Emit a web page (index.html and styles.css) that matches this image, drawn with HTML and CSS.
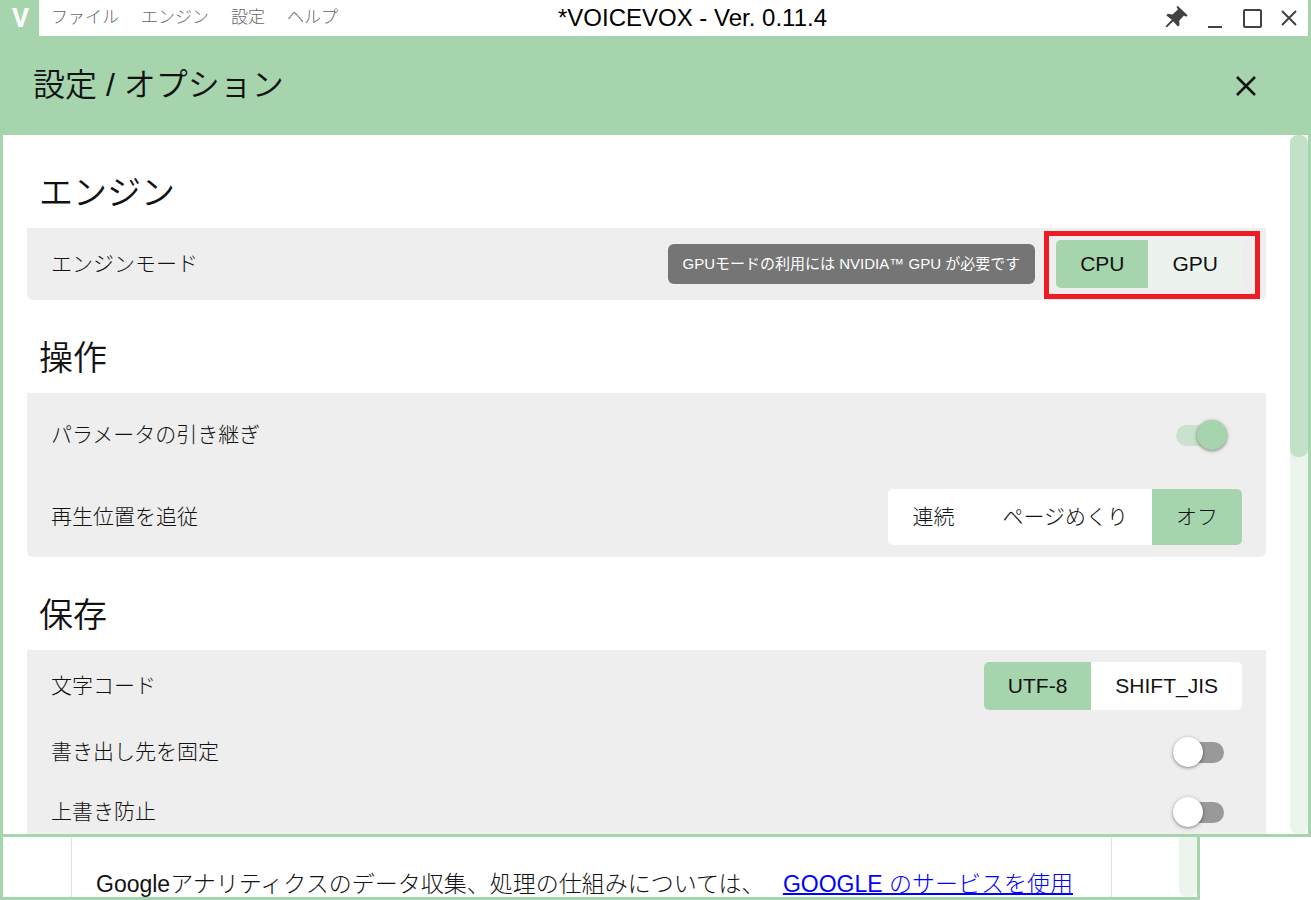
FILE: index.html
```html
<!DOCTYPE html>
<html lang="ja">

<head>
    <meta charset="UTF-8">
    <meta name="viewport" content="width=device-width, initial-scale=1.0">
    <title>VOICEVOX</title>
    <link rel="stylesheet" href="styles.css">
</head>

<body>
    <div class="window">
        <header class="titlebar">
            <span class="logo">V</span>
            <nav class="menu">
                <button type="button">ファイル</button>
                <button type="button">エンジン</button>
                <button type="button">設定</button>
                <button type="button">ヘルプ</button>
            </nav>
            <div class="title">*VOICEVOX - Ver. 0.11.4</div>
            <div class="window-buttons">
                <button type="button" aria-label="最前面に固定">
                    <svg width="23" height="27" viewBox="0 0 68 80"><path fill="currentColor" d="M6 66L1 64L20 44L4 31L8 26L22 28L38 13L34 5L38 3L67 30L63 35L56 31L42 47L43 60L38 64L24 48Z"/></svg>
                </button>
                <button type="button" aria-label="最小化">
                    <svg width="20" height="20" viewBox="0 0 20 20"><path stroke="currentColor" stroke-width="2" d="M3 19H17"/></svg>
                </button>
                <button type="button" aria-label="最大化">
                    <svg width="20" height="20" viewBox="0 0 20 20"><rect x="2" y="2" width="17" height="17" rx="1" fill="none" stroke="currentColor" stroke-width="2"/></svg>
                </button>
                <button type="button" aria-label="閉じる">
                    <svg width="20" height="20" viewBox="0 0 20 20"><path stroke="currentColor" stroke-width="2" d="M3 3L17 17M17 3L3 17"/></svg>
                </button>
            </div>
        </header>

        <div class="toolbar">
            <h1>設定 / オプション</h1>
            <button type="button" class="close" aria-label="設定を閉じる">
                <svg width="24" height="24" viewBox="0 0 24 24"><path stroke="currentColor" stroke-width="2.5" d="M3 3L21 21M21 3L3 21"/></svg>
            </button>
        </div>

        <div class="page">
            <main class="settings">
                <section>
                    <h2>エンジン</h2>
                    <div class="card">
                        <div class="row">
                            <span>エンジンモード</span>
                            <div class="tooltip">GPUモードの利用には NVIDIA™ GPU が必要です</div>
                            <div class="toggle translucent marked">
                                <button type="button" class="active">CPU</button>
                                <button type="button">GPU</button>
                            </div>
                        </div>
                    </div>
                </section>

                <section>
                    <h2>操作</h2>
                    <div class="card">
                        <div class="row tall">
                            <label for="inherit">パラメータの引き継ぎ</label>
                            <input type="checkbox" class="switch" id="inherit" checked>
                        </div>
                        <div class="row">
                            <span>再生位置を追従</span>
                            <div class="toggle large">
                                <button type="button">連続</button>
                                <button type="button">ページめくり</button>
                                <button type="button" class="active">オフ</button>
                            </div>
                        </div>
                    </div>
                </section>

                <section>
                    <h2>保存</h2>
                    <div class="card">
                        <div class="row">
                            <span>文字コード</span>
                            <div class="toggle">
                                <button type="button" class="active">UTF-8</button>
                                <button type="button">SHIFT_JIS</button>
                            </div>
                        </div>
                        <div class="row">
                            <label for="fixed">書き出し先を固定</label>
                            <input type="checkbox" class="switch" id="fixed">
                        </div>
                        <div class="row">
                            <label for="overwrite">上書き防止</label>
                            <input type="checkbox" class="switch" id="overwrite">
                        </div>
                    </div>
                </section>
            </main>
            <div class="scrollbar"><div class="thumb"></div></div>
        </div>
    </div>

    <div class="window-behind">
        <p class="notice">Googleアナリティクスのデータ収集、処理の仕組みについては、 <a href="#">GOOGLE のサービスを使用</a></p>
        <div class="scrollbar"></div>
    </div>
</body>

</html>
```
FILE: styles.css
```css
* {
    box-sizing: border-box;
}

body {
    margin: 0;
    height: 100vh;
    display: flex;
    flex-direction: column;
    overflow: hidden;
    background-color: #fff;
    color: #121212;
    font-family: "Liberation Sans", "Noto Sans CJK JP", sans-serif;
    font-size: 21px;
    font-weight: 300;
    line-height: 32px;
}

button {
    padding: 0;
    border: none;
    background: none;
    color: inherit;
    font: inherit;
    white-space: nowrap;
    cursor: pointer;
}

svg {
    display: block;
}

.window {
    flex: 1;
    min-height: 0;
    display: flex;
    flex-direction: column;
    border: 3px solid #a5d4ad;
    border-top: none;
}

/* Title bar */
.titlebar {
    display: flex;
    align-items: center;
    height: 36px;
    flex-shrink: 0;
}

.logo {
    width: 36px;
    height: 36px;
    padding-right: 1px;
    background-color: #a5d4ad;
    color: #fff;
    font-family: Roboto, sans-serif;
    font-size: 26px;
    font-weight: 700;
    line-height: 36px;
    text-align: center;
}

.menu {
    display: flex;
    gap: 22px;
    padding-left: 12px;
    color: #666;
    font-size: 17px;
}

.title {
    flex: 1;
    padding-right: 118px;
    color: #000;
    font-size: 24px;
    text-align: center;
    white-space: nowrap;
}

.window-buttons {
    display: flex;
    align-items: center;
    gap: 17px;
    padding-right: 9px;
    color: #424242;
}

/* Settings header */
.toolbar {
    display: flex;
    align-items: center;
    justify-content: space-between;
    height: 99px;
    flex-shrink: 0;
    padding: 0 50px 0 30px;
    background-color: #a5d4ad;
}

h1 {
    margin: 0;
    padding-bottom: 2px;
    font-size: 32px;
    font-weight: 350;
    line-height: 48px;
}

/* Settings */
.page {
    flex: 1;
    min-height: 0;
    display: flex;
}

.settings {
    flex: 1;
    padding: 0 24px;
    overflow: hidden;
}

h2 {
    margin: 0;
    padding: 34px 12px 11px;
    font-size: 34px;
    font-weight: 350;
    line-height: 48px;
}

.card {
    background-color: #eee;
    border-radius: 0 0 6px 6px;
}

.row {
    display: flex;
    align-items: center;
    min-height: 60px;
    padding: 12px 24px;
}

.row.tall {
    min-height: 84px;
}

.row > :first-child {
    margin-right: auto;
}

.tooltip {
    margin-right: 21px;
    padding: 4px 15px;
    border-radius: 6px;
    background-color: #757575;
    color: #fff;
    font-size: 15px;
    font-weight: 400;
}

.toggle {
    display: flex;
    position: relative;
    border-radius: 5px;
    background-color: #fff;
}

.toggle button {
    height: 48px;
    padding: 0 24px;
}

.toggle.large button {
    height: 56px;
}

.toggle.translucent {
    background-color: #ecf3ed;
}

.toggle .active {
    background-color: #a5d4ad;
}

.toggle .active:first-child {
    border-radius: 5px 0 0 5px;
}

.toggle .active:last-child {
    border-radius: 0 5px 5px 0;
}

/* Red frame over the engine mode buttons */
.marked::after {
    content: "";
    position: absolute;
    inset: -9px -18px -11px -12px;
    border: 5px solid #ed1c24;
    pointer-events: none;
}

.switch {
    appearance: none;
    position: relative;
    width: 48px;
    height: 21px;
    margin: 0 18px 0 0;
    border-radius: 11px;
    background-color: #999;
    cursor: pointer;
}

.switch::before {
    content: "";
    position: absolute;
    top: -5px;
    left: -3px;
    width: 30px;
    height: 30px;
    border-radius: 50%;
    background-color: #fff;
    box-shadow: 0 1px 3px rgba(0, 0, 0, 0.35), 0 1px 5px rgba(0, 0, 0, 0.15);
}

.switch:checked {
    background-color: #c9e2cd;
}

.switch:checked::before {
    left: 21px;
    background-color: #a5d4ad;
}

.scrollbar {
    width: 18px;
    border-radius: 8px;
    background-color: #ebf5ed;
}

.thumb {
    height: 46%;
    border-radius: 8px;
    background-color: #c2e1c8;
}

/* Lower window, showing below the settings */
.window-behind {
    display: flex;
    height: 63px;
    flex-shrink: 0;
    margin-right: 111px;
    border: 3px solid #a5d4ad;
    border-top: none;
}

.window-behind .scrollbar {
    border-radius: 0 0 8px 8px;
}

.notice {
    flex: 1;
    margin: 0 67px 0 68px;
    padding: 31px 24px 0;
    border: 1px solid #e0e0e0;
    border-width: 0 1px;
    font-size: 23px;
    white-space: nowrap;
    overflow: hidden;
}

.notice a {
    margin-left: 12px;
    color: #00f;
    text-decoration-thickness: 2px;
}
```
